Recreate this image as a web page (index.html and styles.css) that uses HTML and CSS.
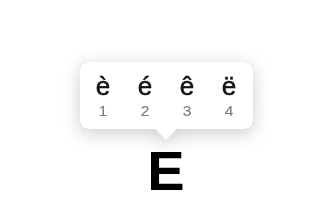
FILE: index.html
```html
<!DOCTYPE html>
<html>
<head>
<meta charset="utf-8">
<link rel="stylesheet" href="styles.css">
</head>
<body>
<div class="stage">
  <div class="popup">
    <div class="grid">
      <div class="cell"><span class="ch">è</span><span class="num">1</span></div>
      <div class="cell"><span class="ch">é</span><span class="num">2</span></div>
      <div class="cell"><span class="ch">ê</span><span class="num">3</span></div>
      <div class="cell"><span class="ch">ë</span><span class="num">4</span></div>
    </div>
    <div class="arrow"></div>
  </div>
  <div class="big">E</div>
</div>
</body>
</html>
```
FILE: styles.css
```css
html, body {
  margin: 0;
  padding: 0;
  background: #ffffff;
}
body {
  width: 330px;
  height: 220px;
  overflow: hidden;
  font-family: "Liberation Sans", Arial, sans-serif;
}
.stage {
  display: flex;
  flex-direction: column;
  align-items: center;
  padding-top: 62px;
  padding-left: 2px;
}
.popup {
  position: relative;
  filter: drop-shadow(0 0 0.6px rgba(0,0,0,0.35)) drop-shadow(0 4px 9px rgba(0,0,0,0.2));
}
.grid {
  display: grid;
  grid-template-columns: repeat(4, 42px);
  padding: 10px 2.5px 9px;
  background: #ffffff;
  border-radius: 8px;
}
.cell {
  display: flex;
  flex-direction: column;
  align-items: center;
  gap: 2px;
}
.ch {
  font-size: 26px;
  line-height: 28px;
  color: #161616;
  -webkit-text-stroke: 0.45px #161616;
  text-shadow: 0 0 0.8px rgba(0,0,0,0.5);
}
.num {
  font-size: 15.5px;
  line-height: 18px;
  color: #808080;
  text-shadow: 0 0 0.5px rgba(0,0,0,0.3);
}
.arrow {
  position: absolute;
  left: 50%;
  bottom: -11px;
  width: 22px;
  height: 11px;
  margin-left: -11px;
  background: #ffffff;
  clip-path: polygon(0 0, 100% 0, 55% 95%, 50% 100%, 45% 95%);
}
.big {
  margin-top: 14px;
  font-size: 56px;
  line-height: 56px;
  font-weight: bold;
  color: #000000;
}
```
